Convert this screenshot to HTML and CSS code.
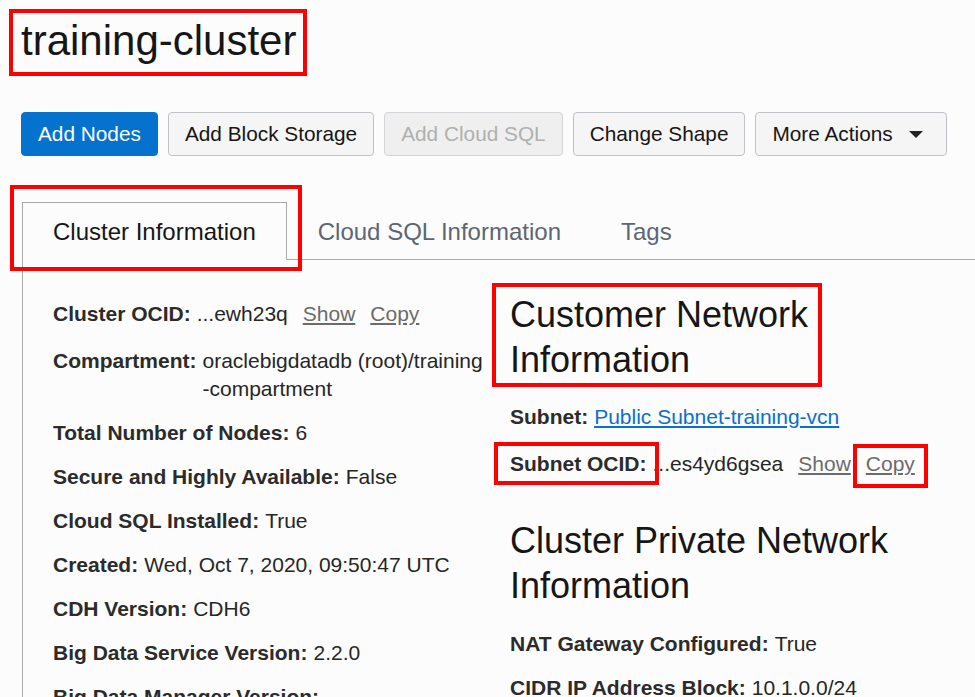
FILE: index.html
```html
<!DOCTYPE html>
<html lang="en">
<head>
<meta charset="utf-8">
<title>training-cluster</title>
<link rel="stylesheet" href="styles.css">
</head>
<body>
<div class="page">
  <h1 class="title">training-cluster</h1>

  <div class="actions">
    <button class="btn btn-primary">Add Nodes</button>
    <button class="btn">Add Block Storage</button>
    <button class="btn btn-disabled" disabled>Add Cloud SQL</button>
    <button class="btn">Change Shape</button>
    <button class="btn btn-menu">More Actions <span class="caret"></span></button>
  </div>

  <div class="tabs">
    <div class="tab tab-active">Cluster Information</div>
    <div class="tab">Cloud SQL Information</div>
    <div class="tab tab-last">Tags</div>
  </div>

  <div class="panel">
    <div class="col col-left">
      <div class="row row-links"><span class="label">Cluster OCID:</span><span class="value">...ewh23q</span><a class="act">Show</a><a class="act">Copy</a></div>
      <div class="row"><span class="label">Compartment:</span><span class="value">oraclebigdatadb (root)/training<br>-compartment</span></div>
      <div class="row"><span class="label">Total Number of Nodes:</span><span class="value">6</span></div>
      <div class="row"><span class="label">Secure and Highly Available:</span><span class="value">False</span></div>
      <div class="row"><span class="label">Cloud SQL Installed:</span><span class="value">True</span></div>
      <div class="row"><span class="label">Created:</span><span class="value">Wed, Oct 7, 2020, 09:50:47 UTC</span></div>
      <div class="row"><span class="label">CDH Version:</span><span class="value">CDH6</span></div>
      <div class="row"><span class="label">Big Data Service Version:</span><span class="value">2.2.0</span></div>
      <div class="row"><span class="label">Big Data Manager Version:</span></div>
    </div>
    <div class="col col-right">
      <h2 class="section">Customer Network<br>Information</h2>
      <div class="row row-links"><span class="label">Subnet:</span><a class="link">Public Subnet-training-vcn</a></div>
      <div class="row row-links row-end"><span class="label">Subnet OCID:</span><span class="value">...es4yd6gsea</span><a class="act">Show</a><a class="act">Copy</a></div>
      <h2 class="section section-2">Cluster Private Network<br>Information</h2>
      <div class="row"><span class="label">NAT Gateway Configured:</span><span class="value">True</span></div>
      <div class="row"><span class="label">CIDR IP Address Block:</span><span class="value">10.1.0.0/24</span></div>
    </div>
  </div>

  <div class="mark mark-title"></div>
  <div class="mark mark-tab"></div>
  <div class="mark mark-customer"></div>
  <div class="mark mark-subnet"></div>
  <div class="mark mark-copy"></div>
</div>
</body>
</html>
```

FILE: styles.css
```css
* { box-sizing: border-box; }

html, body {
  margin: 0;
  padding: 0;
  background: #fcfcfc;
}

body {
  font-family: "Liberation Sans", Arial, sans-serif;
  color: #262626;
}

.page {
  position: relative;
  padding-left: 21px;
  padding-top: 17px;
}

.title {
  margin: 0;
  font-size: 42px;
  line-height: 48px;
  font-weight: normal;
  color: #161616;
}

.actions {
  display: flex;
  gap: 10px;
  margin-top: 47px;
}

.btn {
  height: 44px;
  padding: 0 16px;
  font-family: inherit;
  font-size: 20.8px;
  color: #161616;
  background: #f5f5f5;
  border: 1px solid #bfc2c7;
  border-radius: 4px;
  display: flex;
  align-items: center;
}

.btn-primary {
  background: #0572ce;
  border-color: #0572ce;
  color: #ffffff;
}

.btn-disabled {
  background: #efefef;
  border-color: #d2d4d7;
  color: #b0b0b0;
}

.btn-menu {
  padding-right: 23px;
}

.caret {
  margin-left: 16px;
  width: 0;
  height: 0;
  border-left: 7.5px solid transparent;
  border-right: 7.5px solid transparent;
  border-top: 7px solid #222;
}

.tabs {
  display: flex;
  margin-top: 46px;
  margin-left: 1px;
  border-bottom: 1px solid #aaaaaa;
}

.tab {
  height: 58px;
  margin-bottom: -1px;
  padding: 0 30px;
  border: 1px solid transparent;
  border-bottom: none;
  display: flex;
  align-items: center;
  font-size: 24px;
  color: #5d6673;
}

.tab-last {
  padding-left: 28px;
}

.tab-active {
  border-color: #aaaaaa;
  background: #fcfcfc;
  color: #161616;
}

.panel {
  margin-left: 1px;
  border-left: 1px solid #aaaaaa;
  padding: 32px 0 40px 30px;
  display: grid;
  grid-template-columns: 457px 1fr;
}

.col-left {
  padding-top: 8px;
}

.row {
  display: flex;
  align-items: baseline;
  gap: 6px;
  font-size: 21px;
  line-height: 28px;
  margin-bottom: 16px;
  white-space: nowrap;
}

.row-links {
  margin-bottom: 19px;
}

.col-right .row-links:first-of-type {
  margin-top: 1px;
}

.row-end {
  margin-bottom: 40px;
}

.label {
  font-weight: bold;
  color: #2b2b2b;
}

.value {
  color: #262626;
}

.act {
  margin-left: 9px;
  color: #6b6b6b;
  text-decoration: underline;
}

.link {
  color: #0b6fd0;
  text-decoration: underline;
}

.section {
  margin: 0 0 21px;
  font-size: 36px;
  line-height: 45px;
  font-weight: normal;
  color: #161616;
}

.section-2 {
  margin-bottom: 22px;
}

.mark {
  position: absolute;
  border: 4px solid #ff0000;
}

.mark-title { left: 9px; top: 9px; width: 298px; height: 67px; }
.mark-tab { left: 10px; top: 185px; width: 292px; height: 86px; }
.mark-customer { left: 492px; top: 283px; width: 330px; height: 104px; }
.mark-subnet { left: 494px; top: 442px; width: 165px; height: 43px; }
.mark-copy { left: 853px; top: 444px; width: 75px; height: 44px; }
```
